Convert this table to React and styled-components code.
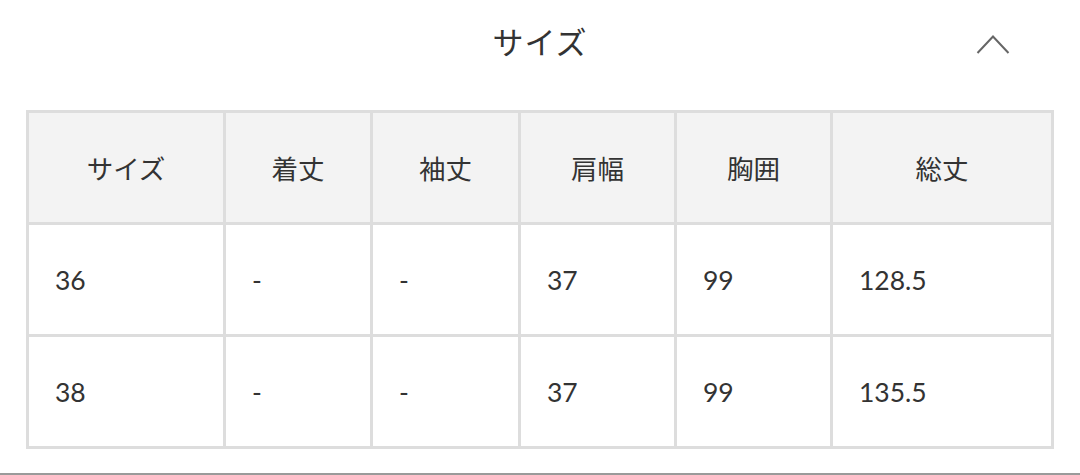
import React from "react";
import styled, { createGlobalStyle } from "styled-components";

const Global = createGlobalStyle`
  html, body { margin: 0; padding: 0; background: #fff; }
  body { font-family: Lato, "Noto Sans CJK JP", sans-serif; color: #333; }
`;

const Section = styled.section`
  width: 1080px;
  height: 475px;
  box-sizing: border-box;
  border-bottom: 2px solid #9a9a9a;
  display: flex;
  flex-direction: column;
`;

const Header = styled.div`
  position: relative;
  height: 84px;
  display: flex;
  align-items: center;
  justify-content: center;
`;

const Title = styled.h2`
  margin: 0;
  font-weight: 400;
  font-size: 31px;
  color: #333;
  letter-spacing: 1px;
  transform: translateY(-2px);
`;

const Toggle = styled.button`
  position: absolute;
  left: 975px;
  top: 34px;
  width: 36px;
  height: 20px;
  padding: 0;
  border: none;
  background: none;
  display: block;
`;

const Wrap = styled.div`
  padding: 26px 29px 0 26px;
`;

const Table = styled.table`
  width: 100%;
  border-collapse: collapse;
  table-layout: fixed;
  font-size: 26.5px;
`;

const Cell = styled.td`
  border: 3px solid #dddddd;
  height: 112px;
  padding: 0 0 0 ${(p) => (p.$head ? 0 : 26)}px;
  text-align: ${(p) => (p.$head ? "center" : "left")};
  background: ${(p) => (p.$head ? "#f3f3f3" : "#fff")};
  color: #333;
  font-weight: 400;
  vertical-align: middle;
  box-sizing: border-box;
`;

const widths = [197, 147, 148, 156, 156, 221];
const heads = ["サイズ", "着丈", "袖丈", "肩幅", "胸囲", "総丈"];
const rows = [
  ["36", "-", "-", "37", "99", "128.5"],
  ["38", "-", "-", "37", "99", "135.5"],
];

export default function App() {
  return (
    <>
      <Global />
      <Section>
        <Header>
          <Title>サイズ</Title>
          <Toggle aria-label="close">
            <svg width="36" height="20" viewBox="0 0 36 20" style={{ display: "block" }}>
              <polyline points="2.5,19 18,2.5 33.5,19" fill="none" stroke="#666" strokeWidth="2" />
            </svg>
          </Toggle>
        </Header>
        <Wrap>
          <Table>
            <colgroup>
              {widths.map((w, i) => (
                <col key={i} style={{ width: w }} />
              ))}
            </colgroup>
            <thead>
              <tr>
                {heads.map((h) => (
                  <Cell as="th" $head key={h}>{h}</Cell>
                ))}
              </tr>
            </thead>
            <tbody>
              {rows.map((r, i) => (
                <tr key={i}>
                  {r.map((c, j) => (
                    <Cell key={j}>{c}</Cell>
                  ))}
                </tr>
              ))}
            </tbody>
          </Table>
        </Wrap>
      </Section>
    </>
  );
}
